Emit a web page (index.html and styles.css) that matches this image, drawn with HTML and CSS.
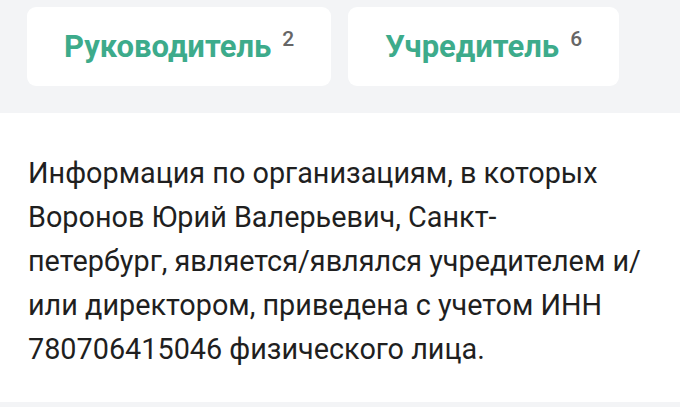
FILE: index.html
```html
<!DOCTYPE html>
<html>
<head>
	<title>Информация</title>
	<link rel="stylesheet" href="styles.css">
</head>
<body>
	<div class="tabs">
		<div class="tab">Руководитель <sup>2</sup></div>
		<div class="tab">Учредитель <sup>6</sup></div>
	</div>
	<div class="info">
		<p>Информация по организациям, в которых<br>Воронов Юрий Валерьевич, Санкт-<br>петербург, является/являлся учредителем и/<br>или директором, приведена с учетом ИНН<br>780706415046 физического лица.</p>
	</div>
	<div class="bottom"></div>
</body>
</html>
```

FILE: styles.css
```css
body {
	margin: 0;
	font-family: Roboto, "Noto Sans", sans-serif;
	background-color: #fff;
}
.tabs {
	background-color: #f3f4f6;
	display: flex;
	gap: 17px;
	padding: 7px 27px 27px;
}
.tab {
	background-color: #fff;
	border-radius: 9px;
	height: 79px;
	padding: 0 37px;
	display: flex;
	align-items: center;
	font-size: 31px;
	font-weight: 700;
	color: #3dab8b;
}
.tab sup {
	font-size: 21px;
	font-weight: 500;
	color: #666;
	margin-left: 11px;
	position: relative;
	top: -8px;
}
.info {
	padding: 38px 28px 31px;
}
.info p {
	margin: 0;
	font-size: 28.8px;
	line-height: 44px;
	color: #1f1f1f;
	white-space: nowrap;
}
.bottom {
	height: 5px;
	background-color: #f3f4f6;
}
```
